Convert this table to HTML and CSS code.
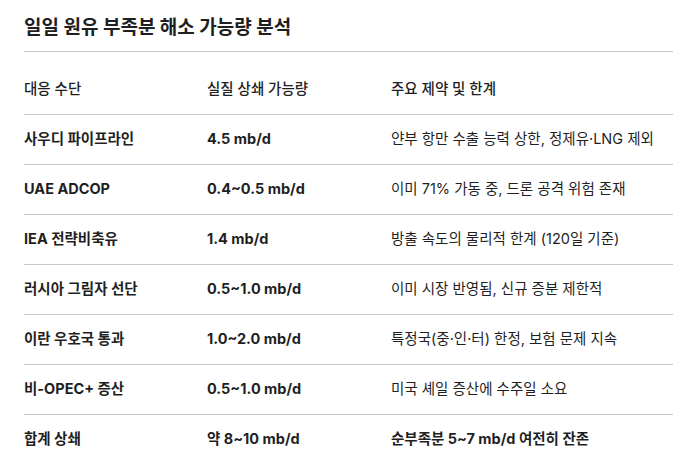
FILE: index.html
```html
<!DOCTYPE html>
<html lang="ko">
<head>
<meta charset="utf-8">
<link rel="stylesheet" href="styles.css">
</head>
<body>
<div class="page">
  <h1 class="title">일일 원유 부족분 해소 가능량 분석</h1>
  <table class="tbl">
    <colgroup><col class="c1"><col class="c2"><col class="c3"></colgroup>
    <thead>
      <tr><th>대응 수단</th><th>실질 상쇄 가능량</th><th>주요 제약 및 한계</th></tr>
    </thead>
    <tbody>
      <tr><td class="b">사우디 파이프라인</td><td class="b">4.5 mb/d</td><td>얀부 항만 수출 능력 상한, 정제유·LNG 제외</td></tr>
      <tr><td class="b">UAE ADCOP</td><td class="b">0.4~0.5 mb/d</td><td>이미 71% 가동 중, 드론 공격 위험 존재</td></tr>
      <tr><td class="b">IEA 전략비축유</td><td class="b">1.4 mb/d</td><td>방출 속도의 물리적 한계 (120일 기준)</td></tr>
      <tr><td class="b">러시아 그림자 선단</td><td class="b">0.5~1.0 mb/d</td><td>이미 시장 반영됨, 신규 증분 제한적</td></tr>
      <tr><td class="b">이란 우호국 통과</td><td class="b">1.0~2.0 mb/d</td><td>특정국(중·인·터) 한정, 보험 문제 지속</td></tr>
      <tr><td class="b">비-OPEC+ 증산</td><td class="b">0.5~1.0 mb/d</td><td>미국 셰일 증산에 수주일 소요</td></tr>
      <tr class="total"><td class="b">합계 상쇄</td><td class="b">약 8~10 mb/d</td><td class="b">순부족분 5~7 mb/d 여전히 잔존</td></tr>
    </tbody>
  </table>
</div>
</body>
</html>
```
FILE: styles.css
```css
html, body {
  margin: 0;
  padding: 0;
  background: #ffffff;
}
body {
  font-family: "Inter", "Noto Sans CJK KR", sans-serif;
  color: #1f1f1f;
}
.page {
  padding: 0 13px 0 24px;
}
.title {
  margin: 0;
  box-sizing: border-box;
  height: 52px;
  padding-top: 15px;
  font-size: 19px;
  font-weight: 700;
  line-height: 26px;
  border-bottom: 1px solid #c8c8c8;
}
.tbl {
  width: 649px;
  border-collapse: collapse;
  font-size: 14.5px;
}
.c1 { width: 183px; }
.c2 { width: 184px; }
.c3 { width: 282px; }
.tbl th, .tbl td {
  text-align: left;
  padding: 0;
  height: 49px;
  vertical-align: middle;
  line-height: 20px;
}
.tbl th {
  font-weight: 500;
  height: 62px;
  padding-top: 12px;
  box-sizing: border-box;
}
.tbl thead tr, .tbl tbody tr {
  border-bottom: 1px solid #c8c8c8;
}
.tbl tbody tr.total {
  border-bottom: none;
}
.tbl td.b {
  font-weight: 700;
}
```
